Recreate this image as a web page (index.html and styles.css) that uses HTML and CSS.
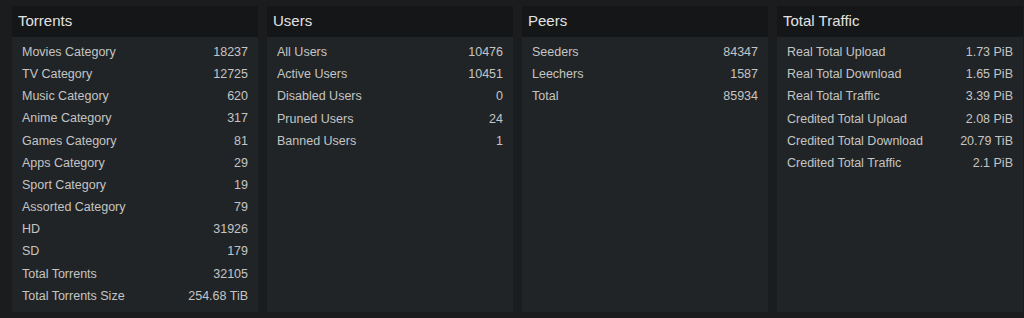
FILE: index.html
```html
<!DOCTYPE html>
<html>
<head>
<meta charset="utf-8">
<link rel="stylesheet" href="styles.css">
</head>
<body>
<div class="stats">
  <section class="panel">
    <div class="panel-head">Torrents</div>
    <div class="panel-body">
      <div class="row"><span>Movies Category</span><span>18237</span></div>
      <div class="row"><span>TV Category</span><span>12725</span></div>
      <div class="row"><span>Music Category</span><span>620</span></div>
      <div class="row"><span>Anime Category</span><span>317</span></div>
      <div class="row"><span>Games Category</span><span>81</span></div>
      <div class="row"><span>Apps Category</span><span>29</span></div>
      <div class="row"><span>Sport Category</span><span>19</span></div>
      <div class="row"><span>Assorted Category</span><span>79</span></div>
      <div class="row"><span>HD</span><span>31926</span></div>
      <div class="row"><span>SD</span><span>179</span></div>
      <div class="row"><span>Total Torrents</span><span>32105</span></div>
      <div class="row"><span>Total Torrents Size</span><span>254.68 TiB</span></div>
    </div>
  </section>
  <section class="panel">
    <div class="panel-head">Users</div>
    <div class="panel-body">
      <div class="row"><span>All Users</span><span>10476</span></div>
      <div class="row"><span>Active Users</span><span>10451</span></div>
      <div class="row"><span>Disabled Users</span><span>0</span></div>
      <div class="row"><span>Pruned Users</span><span>24</span></div>
      <div class="row"><span>Banned Users</span><span>1</span></div>
    </div>
  </section>
  <section class="panel">
    <div class="panel-head">Peers</div>
    <div class="panel-body">
      <div class="row"><span>Seeders</span><span>84347</span></div>
      <div class="row"><span>Leechers</span><span>1587</span></div>
      <div class="row"><span>Total</span><span>85934</span></div>
    </div>
  </section>
  <section class="panel">
    <div class="panel-head">Total Traffic</div>
    <div class="panel-body">
      <div class="row"><span>Real Total Upload</span><span>1.73 PiB</span></div>
      <div class="row"><span>Real Total Download</span><span>1.65 PiB</span></div>
      <div class="row"><span>Real Total Traffic</span><span>3.39 PiB</span></div>
      <div class="row"><span>Credited Total Upload</span><span>2.08 PiB</span></div>
      <div class="row"><span>Credited Total Download</span><span>20.79 TiB</span></div>
      <div class="row"><span>Credited Total Traffic</span><span>2.1 PiB</span></div>
    </div>
  </section>
</div>
</body>
</html>
```

FILE: styles.css
```css
html, body {
  margin: 0;
  padding: 0;
  background: #1b1c1e;
  font-family: "Liberation Sans", Arial, sans-serif;
  overflow: hidden;
}
.stats {
  display: grid;
  grid-template-columns: repeat(4, 246px);
  column-gap: 9px;
  padding: 6px 0 0 12px;
  height: 306px;
  box-sizing: content-box;
}
.panel {
  display: flex;
  flex-direction: column;
  height: 306px;
}
.panel-head {
  background: #151617;
  color: #e2e2e2;
  font-size: 15px;
  height: 31px;
  line-height: 29px;
  padding-left: 6px;
}
.panel-body {
  flex: 1;
  background: #212426;
  padding: 4px 10px 5px 10px;
}
.row {
  display: flex;
  justify-content: space-between;
  height: 22.2px;
  line-height: 22px;
  font-size: 12.5px;
  color: #c4c4c4;
}
```
